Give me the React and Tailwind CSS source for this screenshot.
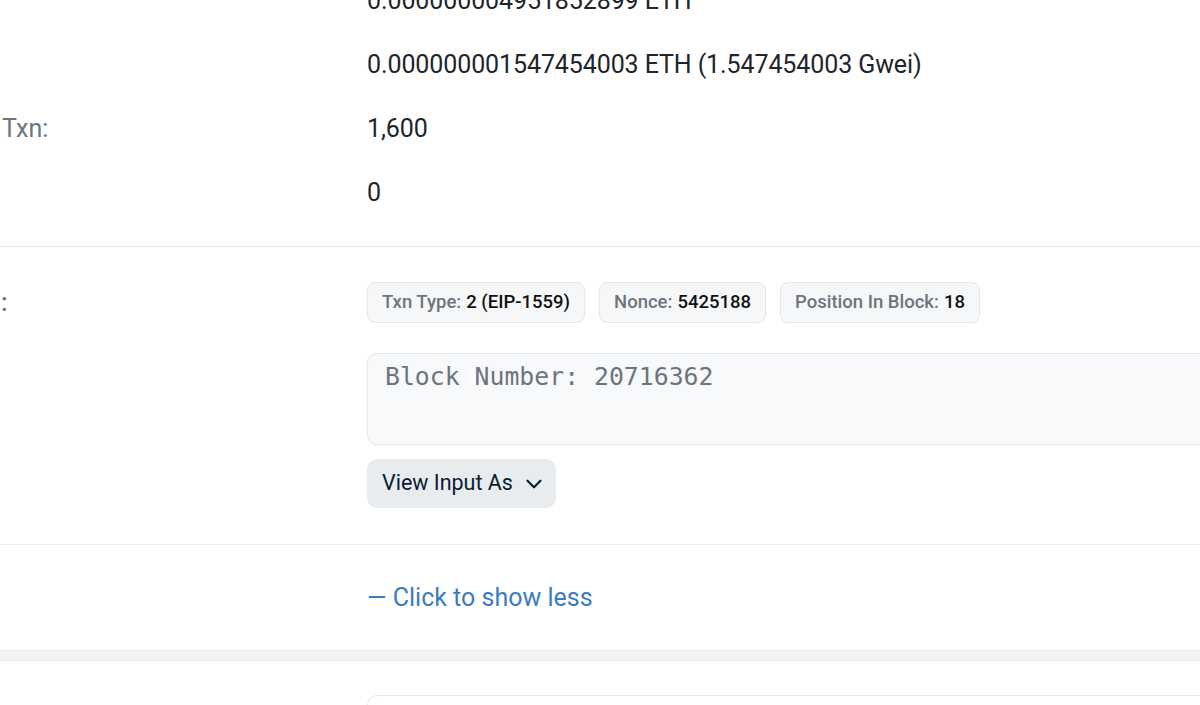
import React from "react";

function Chevron() {
  return (
    <svg width="26" height="26" viewBox="0 0 24 24" fill="none" stroke="currentColor" strokeWidth="2" strokeLinecap="round" strokeLinejoin="round">
      <path d="m6 9 6 6 6-6" />
    </svg>
  );
}

function Pill({ label, value }) {
  return (
    <div className="h-[41px] px-[14px] flex items-center gap-[5px] rounded-[8px] border border-[#e3e6ea] bg-[#f6f7f8] text-[18.5px] font-medium">
      <span className="text-[#6c757d]">{label}</span>
      <span className="text-[#111]">{value}</span>
    </div>
  );
}

export default function App() {
  const rows = [
    ["", "0.000000004951852899 ETH"],
    ["", "0.000000001547454003 ETH (1.547454003 Gwei)"],
    ["Txn:", "1,600"],
    ["", "0"],
  ];
  return (
    <div className="w-[1200px] h-[705px] overflow-hidden bg-white font-['Roboto','Liberation_Sans',sans-serif] text-[25px] text-[#212529]">
      <div className="-mt-[31px]">
        <div className="pb-[21px] border-b border-[#e9ecef]">
          {rows.map(([l, v], i) => (
            <div key={i} className="grid grid-cols-[367px_1fr] h-16 items-center">
              <div className="text-[#6c757d] pl-[2px]">{l}</div>
              <div className="whitespace-nowrap tracking-[-0.1px]">{v}</div>
            </div>
          ))}
        </div>

        <div className="grid grid-cols-[367px_1fr] pt-[35px] pb-[36px] border-b border-[#e9ecef]">
          <div className="h-[41px] flex items-center text-[#6c757d] font-medium pl-[1px]">:</div>
          <div className="flex flex-col items-start">
            <div className="flex gap-[14px]">
              <Pill label="Txn Type:" value="2 (EIP-1559)" />
              <Pill label="Nonce:" value="5425188" />
              <Pill label="Position In Block:" value="18" />
            </div>
            <div className="mt-[30px] h-[92px] w-[900px] rounded-[10px] border border-[#e3e6ea] bg-[#f8f9fa] pl-[17px] pt-[10px] font-['DejaVu_Sans_Mono',monospace] text-[24.8px] leading-[25px] text-[#6c757d]">
              Block Number: 20716362
            </div>
            <button className="mt-[14px] h-[49px] pl-[15px] pr-[9px] flex items-center gap-[8px] rounded-[10px] bg-[#e9ecef] text-[21.5px] text-[#0b1b33]">
              <span>View Input As</span>
              <Chevron />
            </button>
          </div>
        </div>

        <div className="h-[105px] flex items-center pl-[367px]">
          <span className="text-[#3b7cc0] leading-[33px]">— Click to show less</span>
        </div>

        <div className="h-[11px] border-y border-[#e6e8eb] bg-[#f3f4f6]" />

        <div className="pt-[34px] pl-[367px]">
          <div className="h-[40px] w-[900px] rounded-tl-[10px] border-t border-l border-[#e6e8eb]" />
        </div>
      </div>
    </div>
  );
}
